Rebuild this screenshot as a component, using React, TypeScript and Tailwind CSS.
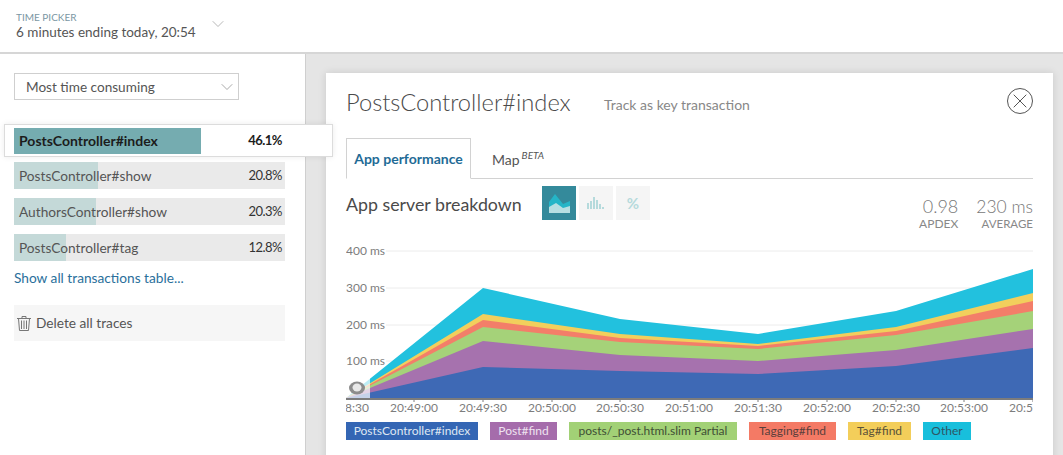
import { ChevronDown, X } from "lucide-react";

const transactions = [
  { name: "PostsController#show", value: "20.8%", barClass: "w-[84px]" },
  { name: "AuthorsController#show", value: "20.3%", barClass: "w-[82px]" },
  { name: "PostsController#tag", value: "12.8%", barClass: "w-[52px]" },
];

const legend = [
  { label: "PostsController#index", className: "w-[132px] bg-[#3466b4] text-[#dfe6f2]" },
  { label: "Post#find", className: "w-[67px] bg-[#a56cab] text-[#efe3f0]" },
  { label: "posts/_post.html.slim Partial", className: "w-[168px] bg-[#a2d176] text-[#3f4f35]" },
  { label: "Tagging#find", className: "w-[87px] bg-[#f47a65] text-[#5a3f3c]" },
  { label: "Tag#find", className: "w-[63px] bg-[#f3ce5a] text-[#5a5238]" },
  { label: "Other", className: "w-[48px] bg-[#18bfdc] text-[#2f5563]" },
];

// stacked layers, drawn back to front: x positions are shared, y is the layer's top edge
const layerXs = [346, 483, 620, 758, 896, 1033];
const layers = [
  { color: "#22c1de", ys: [398, 288, 319, 334, 311, 269] },
  { color: "#f2cf5c", ys: [398, 314, 334, 344, 327, 293] },
  { color: "#f37e69", ys: [398, 320, 338, 346, 331, 301] },
  { color: "#a5d279", ys: [398, 327, 342, 349, 335, 311] },
  { color: "#a672ae", ys: [398, 341, 355, 361, 350, 329] },
  { color: "#3e69b5", ys: [398, 367, 371, 374, 366, 348] },
];

const yLabels = [
  { label: "400 ms", y: 251 },
  { label: "300 ms", y: 288 },
  { label: "200 ms", y: 325 },
  { label: "100 ms", y: 361 },
];

const xLabels = [
  { label: "20:48:30", x: 345 },
  { label: "20:49:00", x: 414 },
  { label: "20:49:30", x: 483 },
  { label: "20:50:00", x: 552 },
  { label: "20:50:30", x: 620 },
  { label: "20:51:00", x: 689 },
  { label: "20:51:30", x: 758 },
  { label: "20:52:00", x: 827 },
  { label: "20:52:30", x: 896 },
  { label: "20:53:00", x: 964 },
  { label: "20:53:30", x: 1033 },
];

function AreaChart() {
  return (
    <svg width={687} height={176} viewBox="346 240 687 176" className="block">
      {yLabels.map((row) => (
        <g key={row.label}>
          <line x1={386} x2={1033} y1={row.y} y2={row.y} stroke="#ececec" />
          <text x={346} y={row.y + 4} fontSize={12} fill="#7d7d7d" fontFamily="Lato, sans-serif">
            {row.label}
          </text>
        </g>
      ))}
      {layers.map((layer) => (
        <polygon
          key={layer.color}
          fill={layer.color}
          points={`${layerXs.map((x, i) => `${x},${layer.ys[i]}`).join(" ")} 1033,398 346,398`}
        />
      ))}
      <rect x={346} y={378} width={24} height={20} fill="#ffffff" fillOpacity={0.7} />
      <ellipse cx={357} cy={388} rx={8} ry={6.5} fill="#8c8c8c" />
      <ellipse cx={357} cy={387.5} rx={4.5} ry={4} fill="#e8e8e8" />
      <rect x={346} y={398} width={687} height={2} fill="#7c7c7c" />
      {xLabels.map((tick) => (
        <g key={tick.label}>
          <line x1={tick.x} x2={tick.x} y1={400} y2={402} stroke="#7c7c7c" />
          <text
            x={tick.x}
            y={412}
            fontSize={12}
            textAnchor="middle"
            fill="#7d7d7d"
            fontFamily="Lato, sans-serif"
          >
            {tick.label}
          </text>
        </g>
      ))}
    </svg>
  );
}

function TrashIcon() {
  return (
    <svg width={14} height={15} viewBox="0 0 14 15" fill="none" stroke="#777" strokeWidth={1}>
      <path d="M0 2.5H14M5 2.5V0.5H9V2.5" />
      <path d="M1.5 2.5L2.5 14.5H11.5L12.5 2.5" />
      <path d="M4.5 4.5V13M7 4.5V13M9.5 4.5V13" />
    </svg>
  );
}

export default function App() {
  return (
    <div className="h-[455px] w-[1063px] overflow-hidden bg-white font-['Lato',sans-serif] text-[#555]">
      {/* Time picker */}
      <header className="flex h-[54px] items-start border-b-2 border-[#d6d6d6] pl-4 pt-[11px]">
        <div>
          <div className="text-[10px] leading-[12px] text-[#7b97a3]">TIME PICKER</div>
          <div className="text-[13.5px] leading-[19px] text-[#555]">6 minutes ending today, 20:54</div>
        </div>
        <ChevronDown className="ml-3 mt-[3px] h-5 w-5 text-[#aaa]" strokeWidth={1} />
      </header>

      <div className="flex">
        {/* Transactions list */}
        <aside className="h-[401px] w-[306px] shrink-0 border-r border-[#cfcfcf] pl-[14px] pt-[19px]">
          <div className="flex h-[27px] w-[225px] items-center justify-between border border-[#cfcfcf] pl-[11px] pr-px text-[13.6px]">
            <span className="pt-0.5">Most time consuming</span>
            <ChevronDown className="h-5 w-5 text-[#999]" strokeWidth={1} />
          </div>

          <div className="relative z-10 -ml-[10px] mt-6 flex h-[33px] w-[329px] items-center border border-[#dcdcdc] bg-white pl-[9px] shadow-[0_0_6px_rgba(0,0,0,0.08)]">
            <div className="relative flex h-[26px] w-[271px] items-center justify-between pl-[5px] pr-[3px] text-[14px] font-bold text-[#1c1c1c]">
              <div className="absolute inset-y-0 left-0 w-[187px] bg-[#75acb0]" />
              <span className="relative">PostsController#index</span>
              <span className="relative text-[13px] tracking-[-0.5px]">46.1%</span>
            </div>
          </div>

          <div className="mt-[5px] flex w-[271px] flex-col gap-[9px]">
            {transactions.map((row) => (
              <div
                key={row.name}
                className="relative flex h-[27px] items-center justify-between bg-[#eaeaea] pl-[5px] pr-[3px] pt-px text-[13.7px]"
              >
                <div className={`absolute inset-y-0 left-0 bg-[#c4d9d8] ${row.barClass}`} />
                <span className="relative">{row.name}</span>
                <span className="relative text-[13px] tracking-[-0.5px] text-[#333]">{row.value}</span>
              </div>
            ))}
          </div>

          <div className="mt-2 text-[13.7px] leading-[18px] text-[#2a6f9b]">Show all transactions table...</div>

          <div className="mt-[18px] flex h-[36px] w-[271px] items-center gap-[5px] bg-[#f6f6f6] pl-[3px] text-[13.7px]">
            <TrashIcon />
            <span>Delete all traces</span>
          </div>
        </aside>

        {/* Detail panel */}
        <main className="flex-1 bg-[#e5e5e5] pl-5 pt-[19px]">
          <div className="h-[400px] w-[727px] bg-white px-5 shadow-[0_0_8px_rgba(0,0,0,0.12)]">
            <div className="flex h-[65px] items-start">
              <h1 className="mt-[14px] w-[258px] text-[23.7px] font-light leading-[30px] text-[#4a4a4a]">
                PostsController#index
              </h1>
              <span className="mt-[23px] text-[14px] leading-[18px] text-[#888]">Track as key transaction</span>
              <div className="ml-auto mt-[15px] flex h-[26px] w-[26px] items-center justify-center rounded-full border border-[#555]">
                <X className="h-6 w-6 text-[#555]" strokeWidth={1} />
              </div>
            </div>

            <div className="flex h-[41px] items-end border-b border-[#d2d2d2]">
              <div className="-mb-px flex h-[41px] w-[125px] items-center justify-center border border-b-white border-[#d2d2d2] text-[14px] font-bold text-[#1f6b96]">
                App performance
              </div>
              <div className="ml-[21px] flex h-[40px] items-center pt-0.5 text-[14px]">
                Map
                <span className="relative -top-1 ml-[2px] text-[10px] italic">BETA</span>
              </div>
            </div>

            <div className="flex h-[61px] items-start pt-[7px]">
              <h2 className="w-[196px] pt-[6px] text-[17.8px] leading-[24px] text-[#4a4a4a]">App server breakdown</h2>
              <div className="flex gap-[3px]">
                <div className="flex h-[34px] w-[34px] items-center justify-center bg-[#348a9b]">
                  <svg width={21} height={19} viewBox="0 0 21 19">
                    <path d="M0 19V8L6 0L14 10L21 7V19Z" fill="#25b5c7" />
                    <path d="M0 19V13L7 9L14 14L21 12V19Z" fill="#b7dfe2" />
                  </svg>
                </div>
                <div className="flex h-[34px] w-[34px] items-center justify-center bg-[#f5f5f5]">
                  <svg width={18} height={12} viewBox="0 0 18 12" fill="#b5dadc">
                    <rect x={0} y={6} width={2} height={6} />
                    <rect x={3} y={4} width={2} height={8} />
                    <rect x={6} y={0} width={2} height={12} />
                    <rect x={9} y={3} width={2} height={9} />
                    <rect x={12} y={7} width={2} height={5} />
                    <rect x={15} y={10} width={2} height={2} />
                  </svg>
                </div>
                <div className="flex h-[34px] w-[34px] items-center justify-center bg-[#f5f5f5] text-[15px] font-bold text-[#b5dadc]">
                  %
                </div>
              </div>
              <div className="ml-auto flex gap-[18px] pt-[10px] text-right">
                <div>
                  <div className="text-[18px] font-light leading-[21px] text-[#777]">0.98</div>
                  <div className="text-[12px] leading-[14px] text-[#888]">APDEX</div>
                </div>
                <div>
                  <div className="text-[17.5px] font-light leading-[21px] text-[#777]">230 ms</div>
                  <div className="text-[11.5px] leading-[14px] text-[#888]">AVERAGE</div>
                </div>
              </div>
            </div>

            <AreaChart />

            <div className="mt-[6px] flex gap-3">
              {legend.map((item) => (
                <div
                  key={item.label}
                  className={`flex h-[18px] items-center justify-center whitespace-nowrap text-[12px] ${item.className}`}
                >
                  {item.label}
                </div>
              ))}
            </div>
          </div>
        </main>
      </div>
    </div>
  );
}
